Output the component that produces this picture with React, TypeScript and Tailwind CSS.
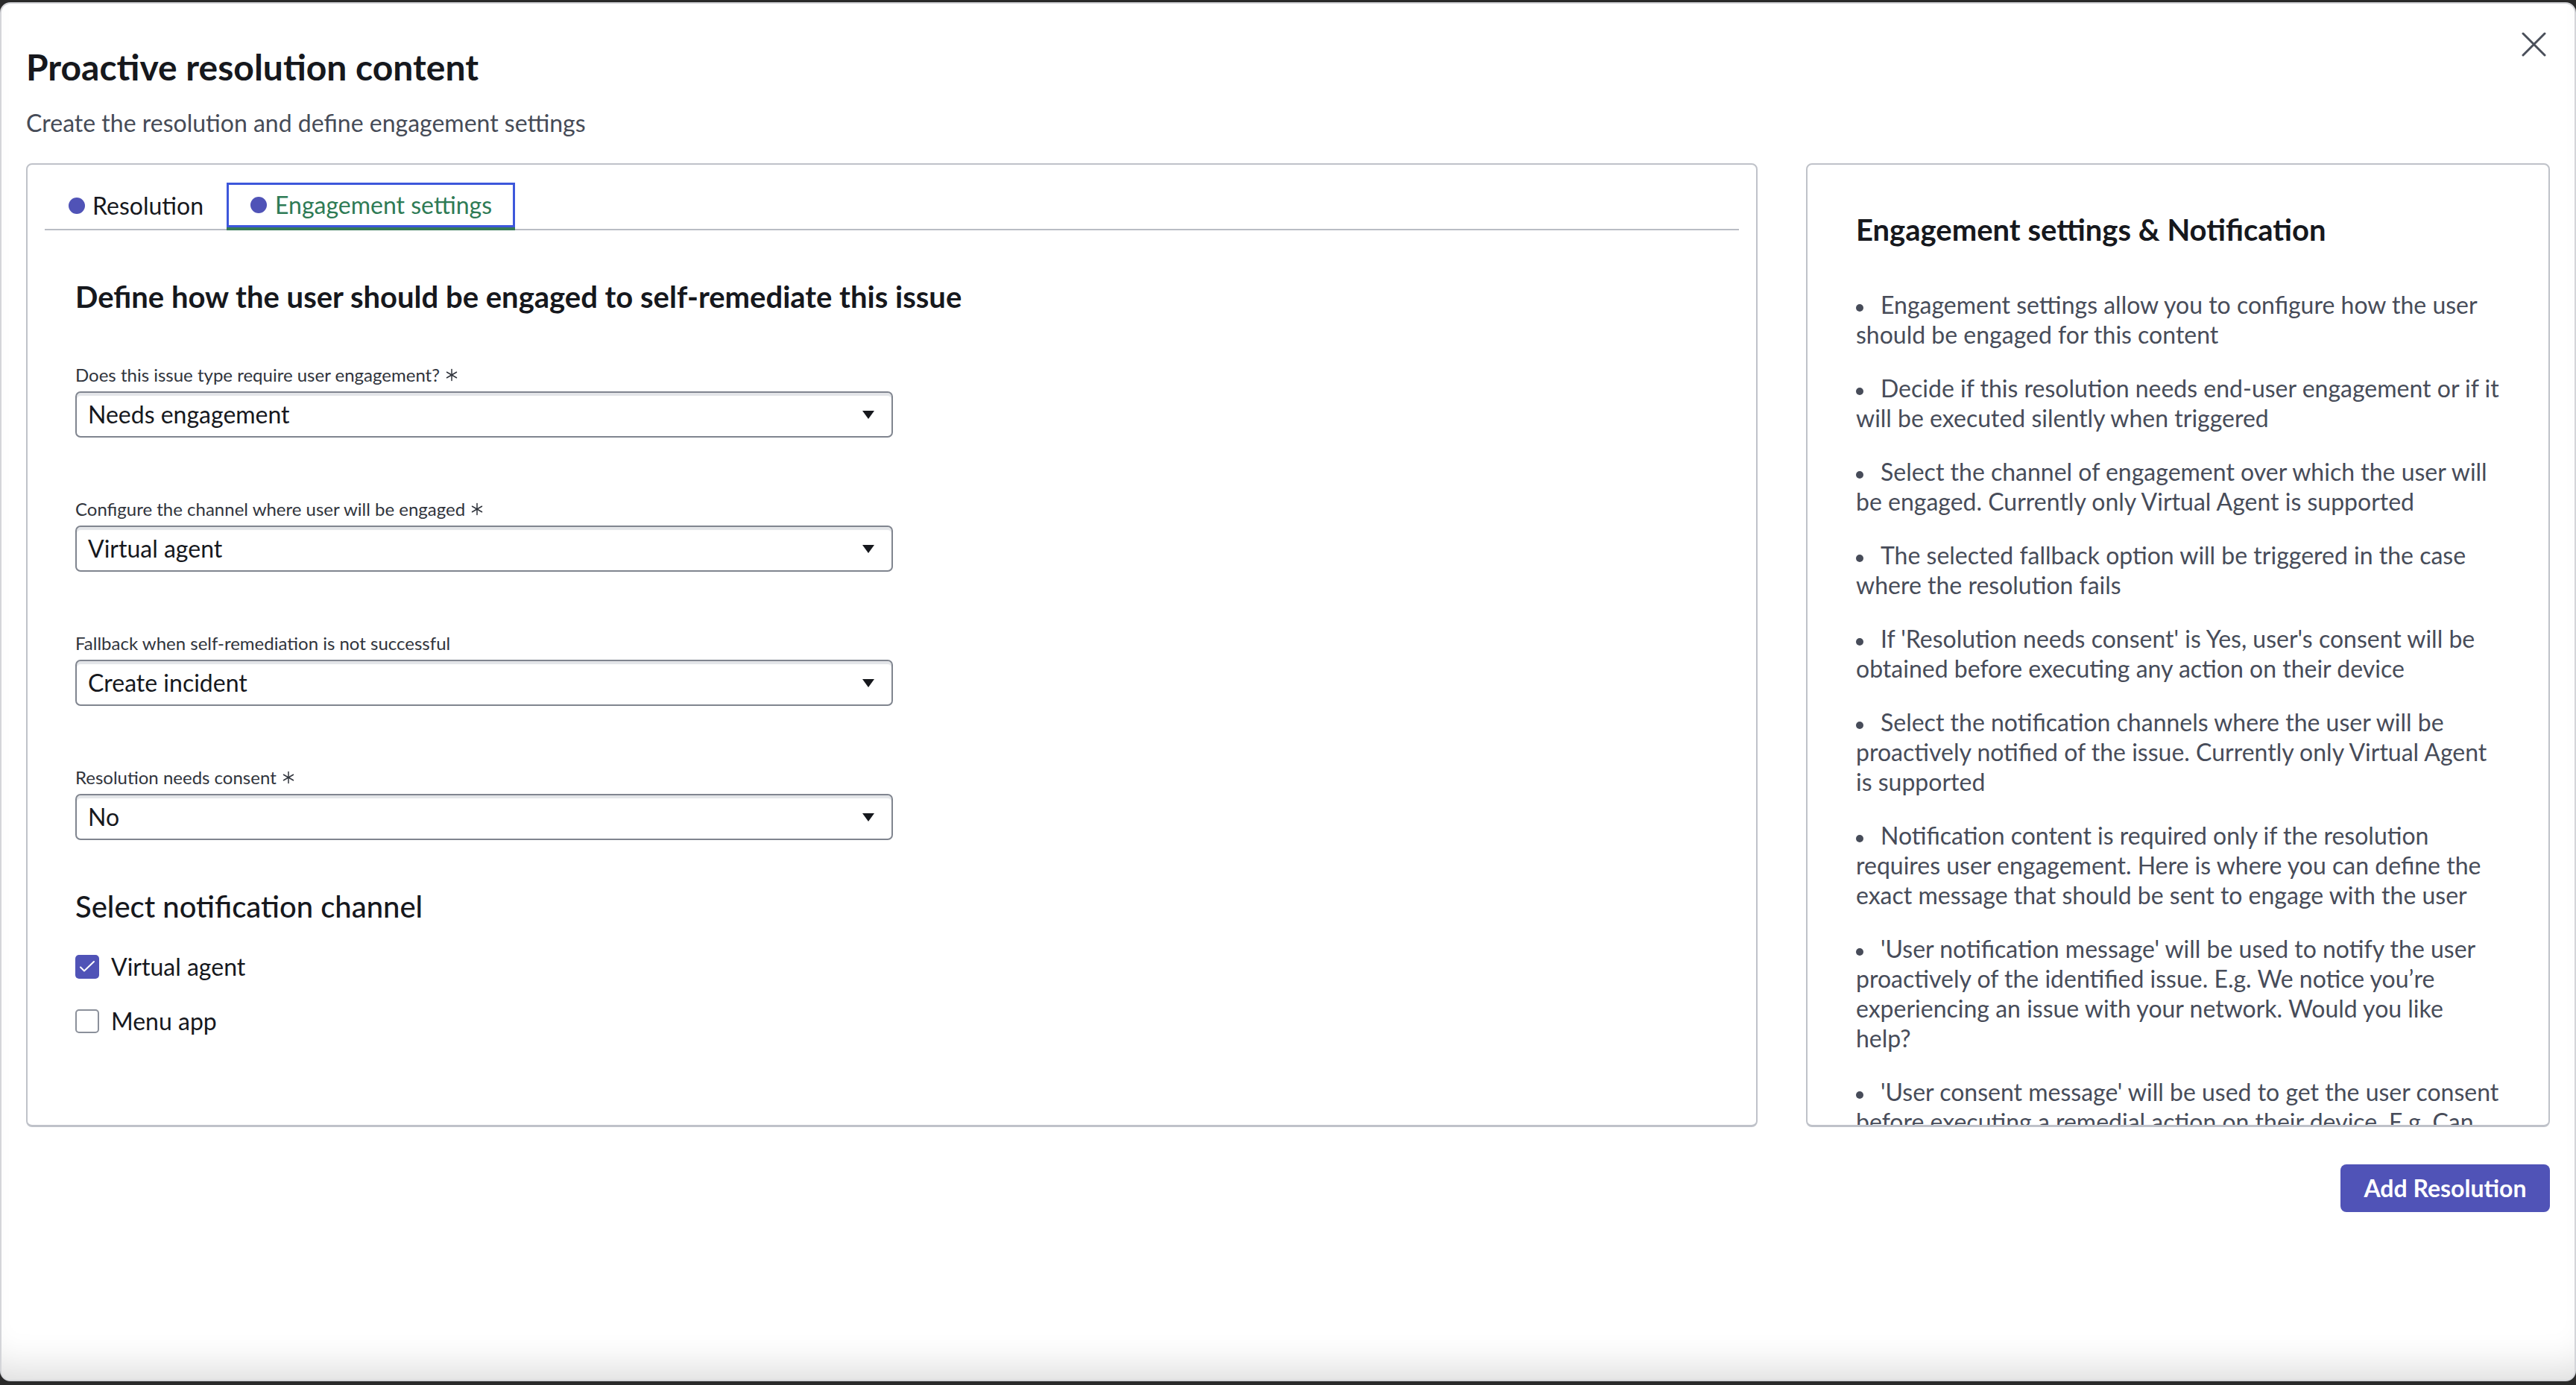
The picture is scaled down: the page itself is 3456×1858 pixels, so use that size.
import { Asterisk } from 'lucide-react';

const tips: string[][] = [
  ['Engagement settings allow you to configure how the user', 'should be engaged for this content'],
  ['Decide if this resolution needs end-user engagement or if it', 'will be executed silently when triggered'],
  ['Select the channel of engagement over which the user will', 'be engaged. Currently only Virtual Agent is supported'],
  ['The selected fallback option will be triggered in the case', 'where the resolution fails'],
  ["If 'Resolution needs consent' is Yes, user's consent will be", 'obtained before executing any action on their device'],
  [
    'Select the notification channels where the user will be',
    'proactively notified of the issue. Currently only Virtual Agent',
    'is supported',
  ],
  [
    'Notification content is required only if the resolution',
    'requires user engagement. Here is where you can define the',
    'exact message that should be sent to engage with the user',
  ],
  [
    "'User notification message' will be used to notify the user",
    'proactively of the identified issue. E.g. We notice you’re',
    'experiencing an issue with your network. Would you like',
    'help?',
  ],
  ["'User consent message' will be used to get the user consent", 'before executing a remedial action on their device. E.g. Can'],
];

function SelectField({ label, value, required }: { label: string; value: string; required?: boolean }) {
  return (
    <div className="w-[1097px]">
      <div className="flex h-[30px] items-center text-[24px] leading-[30px] text-[#30343c]">
        {label}
        {required && <Asterisk className="ml-[1px] h-[30px] w-[30px] text-[#30343c]" strokeWidth={1.2} />}
      </div>
      <div className="mt-[7px] flex h-[62px] items-center justify-between rounded-[7px] border-2 border-[#80858f] bg-white pl-[15px] pr-[23px] shadow-[inset_0_4px_1px_#e3e5e8]">
        <span className="text-[32px] leading-[38px] text-[#16181d]">{value}</span>
        <svg width="16" height="11" viewBox="0 0 16 11">
          <path d="M0 0h16L8 11z" fill="#16181d" />
        </svg>
      </div>
    </div>
  );
}

function CheckRow({ label, checked }: { label: string; checked?: boolean }) {
  return (
    <div className="flex h-[38px] items-center gap-[16px]">
      {checked ? (
        <span className="flex h-[32px] w-[32px] items-center justify-center rounded-[5px] bg-[#5053b7]">
          <svg width="32" height="32" viewBox="0 0 32 32">
            <path d="M7 16.5l5 5L25 9" fill="none" stroke="#fff" strokeWidth="2" strokeLinecap="round" strokeLinejoin="round" />
          </svg>
        </span>
      ) : (
        <span className="h-[32px] w-[32px] rounded-[5px] border-2 border-[#8b909a] bg-white" />
      )}
      <span className="text-[32px] leading-[38px] text-[#16181d]">{label}</span>
    </div>
  );
}

export default function App() {
  return (
    <div className="h-[1858px] w-full bg-[#2a2a2a] pb-[5px] pt-[3px] font-[Lato,sans-serif]">
      <div className="relative h-full overflow-hidden rounded-[14px] border-2 border-[#d4d5d9] bg-white px-[33px] pt-[54px] shadow-[inset_0_-50px_50px_-35px_rgba(0,0,0,0.14)]">
        <button className="absolute right-[38px] top-[38px] h-[33px] w-[33px]">
          <svg width="33" height="33" viewBox="0 0 33 33">
            <path d="M2 2l29 29M31 2L2 31" stroke="#4a4f5a" strokeWidth="3" strokeLinecap="round" />
          </svg>
        </button>

        <h1 className="text-[48px] font-bold leading-[62px] text-[#16181d]">Proactive resolution content</h1>
        <p className="mt-[25px] text-[32px] leading-[38px] text-[#464b57]">
          Create the resolution and define engagement settings
        </p>

        <div className="mt-[35px] flex gap-[65px]">
          <div className="h-[1293px] flex-1 rounded-[8px] border-2 border-b-[3px] border-[#bfc2c9] px-[23px] pt-[24px]">
            <div className="flex h-[64px] border-b-2 border-[#b9bdc4]">
              <div className="flex items-center gap-[10px] pl-[32px] pr-[31px]">
                <span className="h-[22px] w-[22px] rounded-full bg-[#5053b7]" />
                <span className="text-[32px] text-[#16181d]">Resolution</span>
              </div>
              <div className="-mb-[2px] flex items-center gap-[11px] border-b-4 border-[#367a56] pl-[32px] pr-[31px] shadow-[inset_0_0_0_3px_#3d57db]">
                <span className="h-[22px] w-[22px] rounded-full bg-[#5053b7]" />
                <span className="text-[32px] text-[#2e7b55]">Engagement settings</span>
              </div>
            </div>

            <div className="pl-[41px]">
              <h2 className="mt-[65px] text-[40px] font-bold leading-[48px] text-[#16181d]">
                Define how the user should be engaged to self-remediate this issue
              </h2>
              <div className="mt-[66px] flex flex-col gap-[81px]">
                <SelectField label="Does this issue type require user engagement?" value="Needs engagement" required />
                <SelectField label="Configure the channel where user will be engaged" value="Virtual agent" required />
                <SelectField label="Fallback when self-remediation is not successful" value="Create incident" />
                <SelectField label="Resolution needs consent" value="No" required />
              </div>
              <h3 className="mt-[65px] text-[40px] font-medium leading-[48px] text-[#16181d]">Select notification channel</h3>
              <div className="mt-[38px] flex flex-col gap-[35px]">
                <CheckRow label="Virtual agent" checked />
                <CheckRow label="Menu app" />
              </div>
            </div>
          </div>

          <div className="h-[1293px] w-[998px] overflow-hidden rounded-[8px] border-2 border-b-[3px] border-[#bfc2c9] pl-[65px] pr-[30px] pt-[64px]">
            <h2 className="text-[40px] font-bold leading-[46px] text-[#16181d]">Engagement settings &amp; Notification</h2>
            <div className="mt-[58px] flex flex-col gap-[32px]">
              {tips.map((lines, i) => (
                <p key={i} className="whitespace-nowrap text-[32px] leading-[40px] text-[#474c59]">
                  {lines.map((line, j) => (
                    <span key={j} className="block">
                      {j === 0 && <span className="mr-[23px] inline-block h-[10px] w-[10px] rounded-full bg-[#474c59] align-middle" />}
                      {line}
                    </span>
                  ))}
                </p>
              ))}
            </div>
          </div>
        </div>

        <div className="mt-[50px] flex justify-end">
          <button className="h-[64px] w-[281px] rounded-[8px] bg-[#5053b7] text-[32px] font-bold text-white">
            Add Resolution
          </button>
        </div>
      </div>
    </div>
  );
}
